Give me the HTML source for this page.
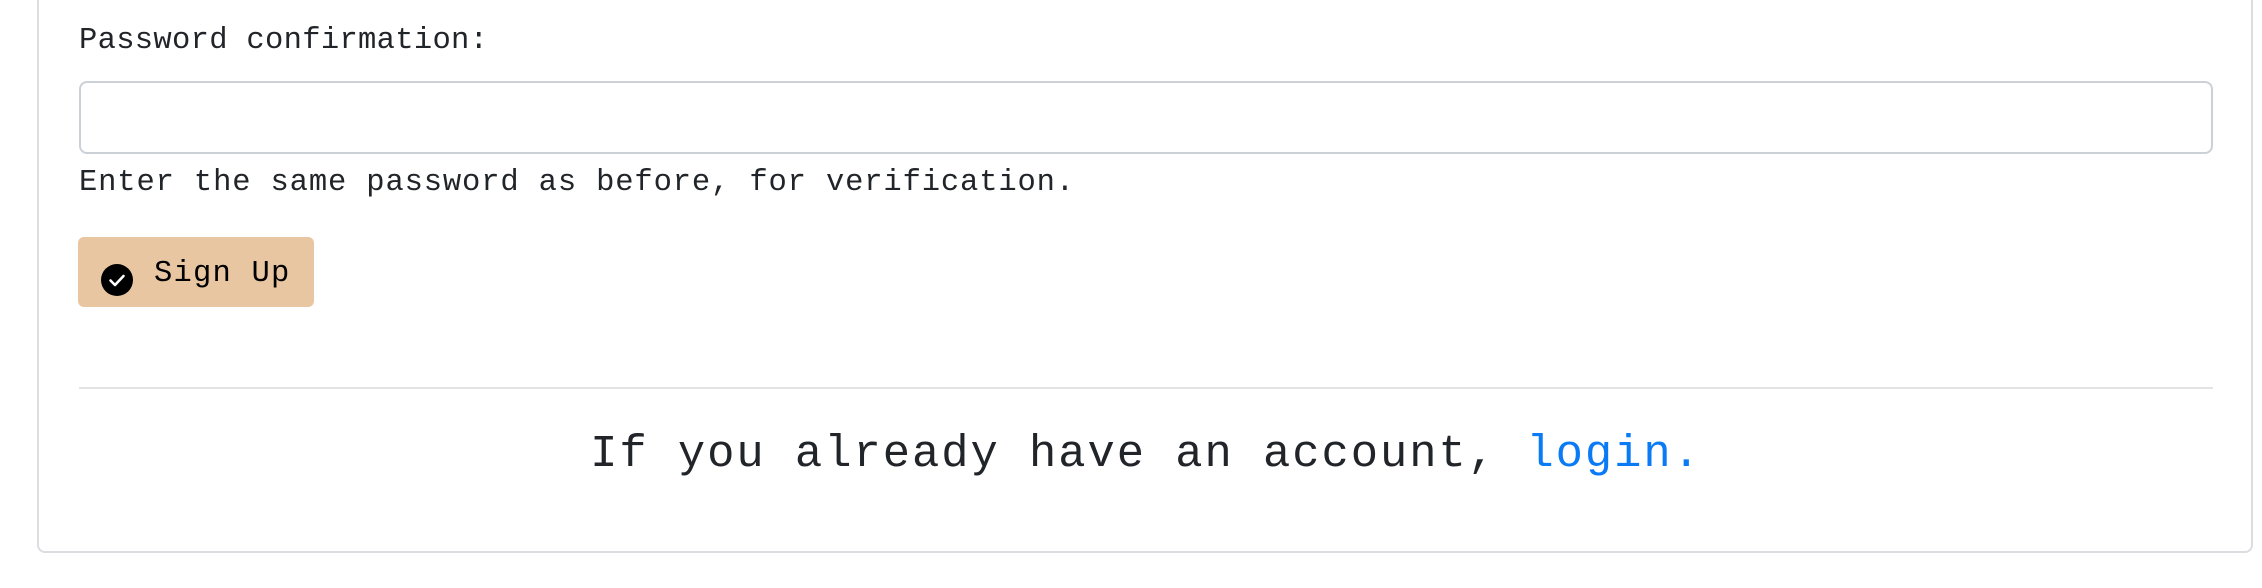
<!DOCTYPE html>
<html><head><style>
html,body{margin:0;padding:0;background:#fff;width:2262px;height:588px;overflow:hidden;}
body{font-family:"Liberation Mono",monospace;color:#212529;position:relative;}
.card{position:absolute;left:37px;top:-20px;width:2216px;height:573px;border:2px solid #dcdde0;border-top:none;border-radius:0 0 8px 8px;box-sizing:border-box;}
.t{position:absolute;white-space:nowrap;font-size:30.5px;line-height:1;}
.inp{position:absolute;left:79px;top:81px;width:2134px;height:73px;border:2px solid #ccd1d7;border-radius:8px;box-sizing:border-box;}
.btn{position:absolute;left:78px;top:237px;width:236px;height:70px;background:#e8c6a1;border-radius:6px;}
.hr{position:absolute;left:79px;top:387px;width:2134px;height:2px;background:#e2e3e5;}
</style></head><body>
<div class="card"></div>
<div class="t" style="left:79px;top:26px;letter-spacing:0.3px;">Password confirmation:</div>
<div class="inp"></div>
<div class="t" style="left:79px;top:168px;letter-spacing:0.85px;">Enter the same password as before, for verification.</div>
<div class="btn">
<svg style="position:absolute;left:23px;top:27px" width="32" height="32" viewBox="0 0 32 32"><circle cx="16" cy="16" r="16" fill="#000"/><path d="M9.5 16.5l4.5 4.5 8.5-9" stroke="#fff" stroke-width="2.6" fill="none" stroke-linecap="round" stroke-linejoin="round"/></svg>
<div class="t" style="left:76px;top:22px;color:#000;letter-spacing:1.2px;">Sign Up</div>
</div>
<div class="hr"></div>
<div class="t" style="left:0;width:2292px;text-align:center;top:432px;font-size:45.5px;letter-spacing:1.95px;">If you already have an account, <span style="color:#0a7bf5">login.</span></div>
</body></html>
